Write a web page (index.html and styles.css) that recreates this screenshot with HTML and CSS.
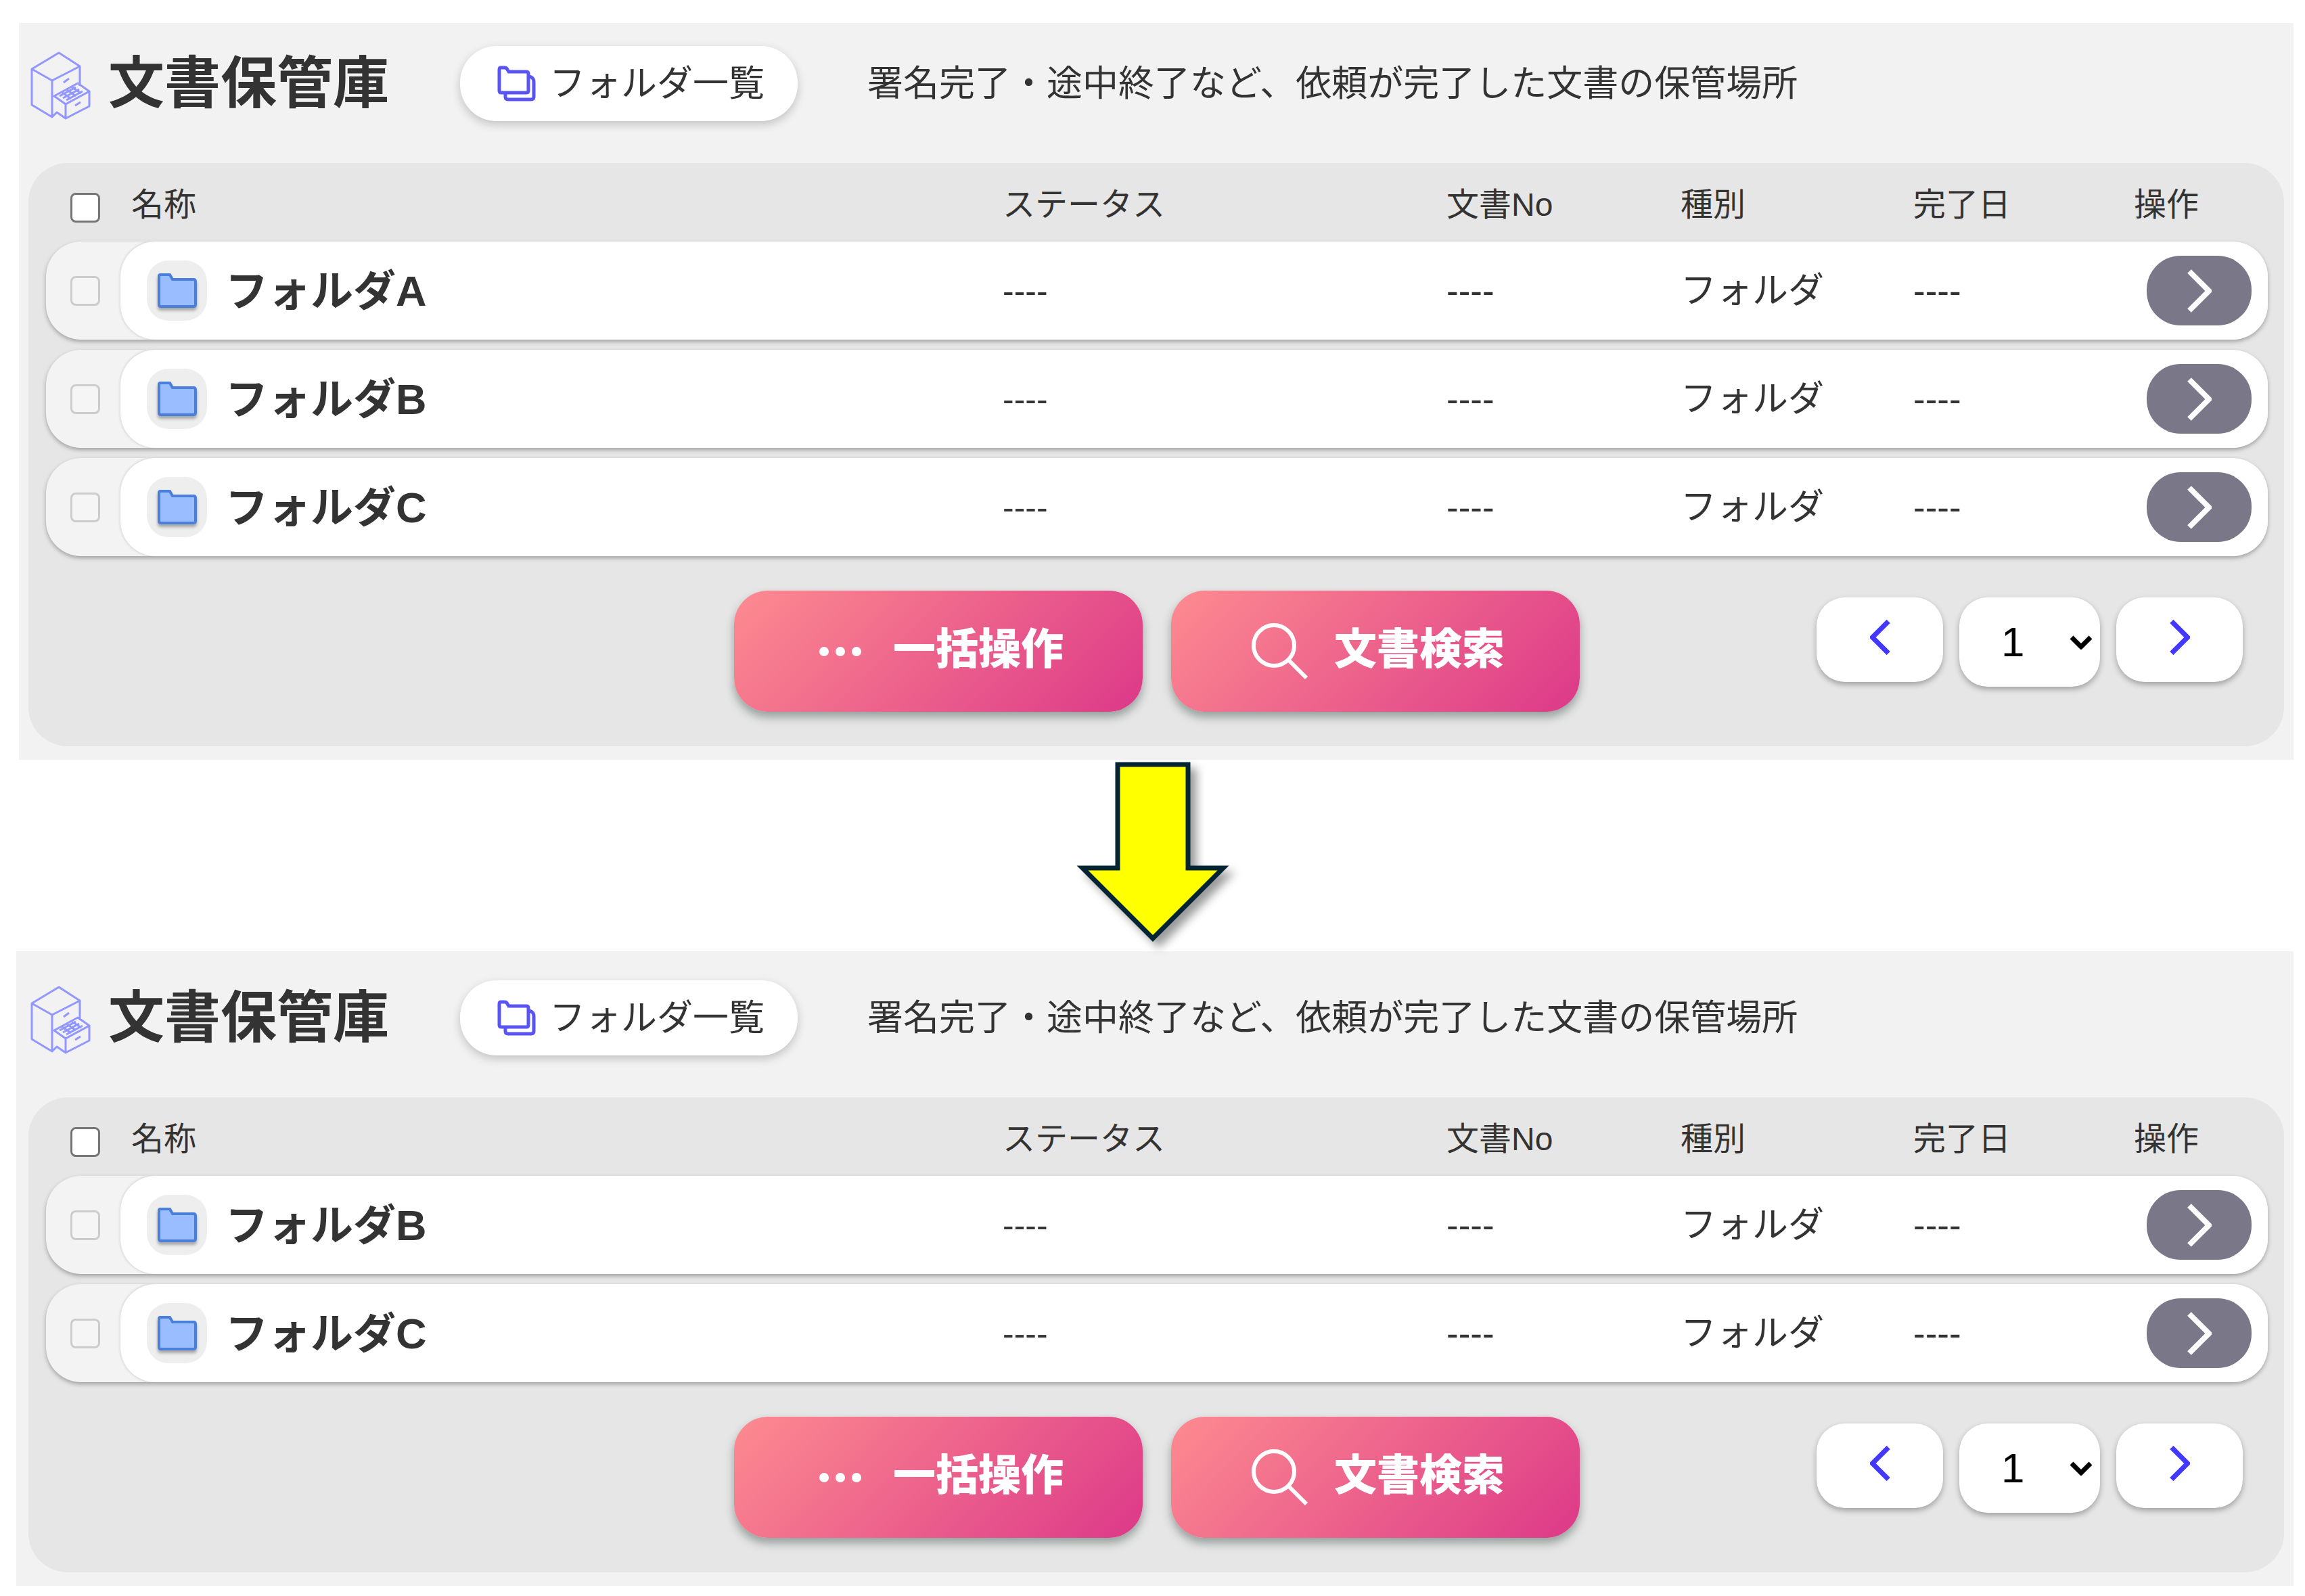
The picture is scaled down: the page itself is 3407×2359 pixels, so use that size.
FILE: index.html
```html
<!DOCTYPE html>
<html lang="ja">

<head>
    <meta charset="utf-8">
    <title>文書保管庫</title>
    <link rel="stylesheet" href="styles.css">
</head>

<body>
<svg class="sprite" aria-hidden="true">
    <symbol id="cabinet" viewBox="0 0 90 102">
        <path d="M42 2 73 22 32 43 2 26ZM2 26V79L32 97V43M73 22V51M32 97 39 90 52 99V78L35 66 70 47 87 59 52 78M87 59V81L52 99M43 66 67 53M48 69 72 56M53 72 77 59M46 60 60 70M53 56 67 66M60 52 75 62M49 46 57 40M66 80 74 75" />
    </symbol>
    <symbol id="folders" viewBox="0 0 57 53">
        <path d="M5 3H11Q14 3 15 6L17 9H43Q46 9 46 12V37Q46 40 43 40H6Q3 40 3 37V6Q3 3 5 3ZM48 16Q54 18 54 24V46Q54 50 50 50H16Q12 50 12 46V41" />
    </symbol>
    <symbol id="folder" viewBox="0 0 58 52">
        <path d="M4 2H18L22 9H53Q56 9 56 12V46Q56 49 53 49H5Q2 49 2 46V4Q2 2 4 2Z" />
    </symbol>
    <symbol id="next" viewBox="0 0 36 64">
        <path d="M3 3 32 32 3 61" />
    </symbol>
    <symbol id="dots" viewBox="0 0 72 16">
        <circle cx="8" cy="8" r="7" /><circle cx="32" cy="8" r="7" /><circle cx="56" cy="8" r="7" />
    </symbol>
    <symbol id="search" viewBox="0 0 84 84">
        <circle cx="33" cy="33" r="30" /><path d="M54 54 81 81" />
    </symbol>
</svg>

<main class="page">
    <section class="panel panel-before">
        <header class="header">
            <svg class="cabinet"><use href="#cabinet" /></svg>
            <h1>文書保管庫</h1>
            <button type="button" class="folder-list"><svg><use href="#folders" /></svg>フォルダ一覧</button>
            <p>署名完了・途中終了など、依頼が完了した文書の保管場所</p>
        </header>
        <div class="card">
            <table class="files">
                <thead>
                    <tr>
                        <th class="check"><input type="checkbox" aria-label="すべて選択"></th>
                        <th class="name">名称</th>
                        <th>ステータス</th>
                        <th>文書No</th>
                        <th>種別</th>
                        <th>完了日</th>
                        <th>操作</th>
                    </tr>
                </thead>
                <tbody>
                    <tr>
                        <td class="check"><input type="checkbox" aria-label="フォルダA" disabled></td>
                        <td class="name"><span class="badge"><svg><use href="#folder" /></svg></span>フォルダA</td>
                        <td class="status">----</td>
                        <td>----</td>
                        <td>フォルダ</td>
                        <td>----</td>
                        <td class="action"><button type="button" class="open" aria-label="開く"><svg><use href="#next" /></svg></button></td>
                    </tr>
                    <tr>
                        <td class="check"><input type="checkbox" aria-label="フォルダB" disabled></td>
                        <td class="name"><span class="badge"><svg><use href="#folder" /></svg></span>フォルダB</td>
                        <td class="status">----</td>
                        <td>----</td>
                        <td>フォルダ</td>
                        <td>----</td>
                        <td class="action"><button type="button" class="open" aria-label="開く"><svg><use href="#next" /></svg></button></td>
                    </tr>
                    <tr>
                        <td class="check"><input type="checkbox" aria-label="フォルダC" disabled></td>
                        <td class="name"><span class="badge"><svg><use href="#folder" /></svg></span>フォルダC</td>
                        <td class="status">----</td>
                        <td>----</td>
                        <td>フォルダ</td>
                        <td>----</td>
                        <td class="action"><button type="button" class="open" aria-label="開く"><svg><use href="#next" /></svg></button></td>
                    </tr>
                </tbody>
            </table>
            <footer class="footer">
                <div class="actions">
                    <button type="button" class="main-button"><svg class="dots"><use href="#dots" /></svg>一括操作</button>
                    <button type="button" class="main-button"><svg class="search"><use href="#search" /></svg>文書検索</button>
                </div>
                <nav class="pager">
                    <button type="button" aria-label="前へ"><svg class="prev"><use href="#next" /></svg></button>
                    <div class="select">
                        <select aria-label="ページ">
                            <option>1</option>
                        </select>
                        <svg viewBox="0 0 34 22"><path d="M3 4 17 18 31 4" /></svg>
                    </div>
                    <button type="button" aria-label="次へ"><svg><use href="#next" /></svg></button>
                </nav>
            </footer>
        </div>
    </section>

    <div class="arrow">
        <svg viewBox="0 0 226 266"><path d="M61 4H165V157H217L113 261 9 157H61Z" /></svg>
    </div>

    <section class="panel panel-after">
        <header class="header">
            <svg class="cabinet"><use href="#cabinet" /></svg>
            <h1>文書保管庫</h1>
            <button type="button" class="folder-list"><svg><use href="#folders" /></svg>フォルダ一覧</button>
            <p>署名完了・途中終了など、依頼が完了した文書の保管場所</p>
        </header>
        <div class="card">
            <table class="files">
                <thead>
                    <tr>
                        <th class="check"><input type="checkbox" aria-label="すべて選択"></th>
                        <th class="name">名称</th>
                        <th>ステータス</th>
                        <th>文書No</th>
                        <th>種別</th>
                        <th>完了日</th>
                        <th>操作</th>
                    </tr>
                </thead>
                <tbody>
                    <tr>
                        <td class="check"><input type="checkbox" aria-label="フォルダB" disabled></td>
                        <td class="name"><span class="badge"><svg><use href="#folder" /></svg></span>フォルダB</td>
                        <td class="status">----</td>
                        <td>----</td>
                        <td>フォルダ</td>
                        <td>----</td>
                        <td class="action"><button type="button" class="open" aria-label="開く"><svg><use href="#next" /></svg></button></td>
                    </tr>
                    <tr>
                        <td class="check"><input type="checkbox" aria-label="フォルダC" disabled></td>
                        <td class="name"><span class="badge"><svg><use href="#folder" /></svg></span>フォルダC</td>
                        <td class="status">----</td>
                        <td>----</td>
                        <td>フォルダ</td>
                        <td>----</td>
                        <td class="action"><button type="button" class="open" aria-label="開く"><svg><use href="#next" /></svg></button></td>
                    </tr>
                </tbody>
            </table>
            <footer class="footer">
                <div class="actions">
                    <button type="button" class="main-button"><svg class="dots"><use href="#dots" /></svg>一括操作</button>
                    <button type="button" class="main-button"><svg class="search"><use href="#search" /></svg>文書検索</button>
                </div>
                <nav class="pager">
                    <button type="button" aria-label="前へ"><svg class="prev"><use href="#next" /></svg></button>
                    <div class="select">
                        <select aria-label="ページ">
                            <option>1</option>
                        </select>
                        <svg viewBox="0 0 34 22"><path d="M3 4 17 18 31 4" /></svg>
                    </div>
                    <button type="button" aria-label="次へ"><svg><use href="#next" /></svg></button>
                </nav>
            </footer>
        </div>
    </section>
</main>
</body>
</html>
```
FILE: styles.css
```css
* {
    box-sizing: border-box;
}
body, html {
    padding: 0;
    margin: 0;
}
body {
    background-color: #fff;
    color: #333;
    font-family: "Liberation Sans", "Noto Sans CJK JP", sans-serif;
    font-size: 53px;
    line-height: 72px;
}
button, select {
    font-family: inherit;
    font-size: inherit;
    line-height: inherit;
    color: inherit;
    border: 0;
    margin: 0;
    padding: 0;
    background-color: #fff;
}
svg {
    display: block;
    flex: none;
    fill: none;
}
.sprite {
    display: none;
}
.page {
    padding: 34px 17px 16px 24px;
}
.panel {
    background-color: #f2f2f2;
    padding: 0 14px 20px 18px;
}
.panel-before {
    margin-left: 4px;
    padding-left: 14px;
}
.panel-after {
    padding-top: 9px;
}

/* title bar */
.header {
    display: flex;
    align-items: center;
    padding: 34px 0 62px 3px;
}
.cabinet {
    width: 90px;
    height: 102px;
    margin-top: 6px;
    stroke: #9296ff;
    stroke-width: 3;
    stroke-linejoin: round;
}
.header h1 {
    margin: 0 0 0 25px;
    width: 520px;
    font-size: 83px;
    line-height: 100px;
}
.header p {
    margin: 0 0 0 103px;
}
.folder-list {
    display: flex;
    align-items: center;
    justify-content: center;
    gap: 20px;
    width: 499px;
    height: 111px;
    padding-left: 6px;
    border-radius: 54px;
    box-shadow: 0 5px 14px rgba(0,0,0,0.2);
}
.folder-list svg {
    width: 57px;
    height: 53px;
    stroke: #5a54f2;
    stroke-width: 5;
}

/* list */
.card {
    background-color: #e6e6e6;
    border-radius: 58px;
    padding: 0 24px 51px 26px;
}
.files, .files thead {
    display: block;
}
.files tbody {
    display: grid;
    gap: 15px;
}
.files tr {
    display: grid;
    grid-template-columns: 110px 1304fr 656fr 346fr 344fr 326fr 198px;
}
.files thead tr {
    height: 116px;
    padding-top: 8px;
}
.files tbody tr {
    height: 145px;
    background-color: #f3f3f3;
    border-radius: 52px;
    box-shadow: 0 3px 6px rgba(0,0,0,0.3);
    overflow: hidden;
}
.files th, .files td {
    display: flex;
    align-items: center;
    padding: 0;
}
.files th {
    font-size: 48px;
    font-weight: normal;
}
.files td {
    background-color: #fff;
}
.files .check {
    padding-left: 36px;
    background-color: transparent;
}
.files th.check {
    padding-top: 8px;
}
.files th.name {
    padding-left: 16px;
}
.files td.name {
    padding-left: 39px;
    gap: 27px;
    font-size: 63px;
    font-weight: bold;
    border-radius: 52px 0 0 52px;
    box-shadow: 0 0 4px rgba(0,0,0,0.2);
}
.files .status {
    font-size: 50px;
}
.files .action {
    justify-content: flex-end;
    padding-right: 24px;
}
.check input {
    appearance: none;
    width: 44px;
    height: 44px;
    margin: 0;
    border: 3px solid #767676;
    border-radius: 8px;
    background-color: #fff;
}
.check input:disabled {
    border-color: #ccc;
    background-color: #f5f5f5;
}
.badge {
    display: flex;
    align-items: center;
    justify-content: center;
    width: 89px;
    height: 89px;
    border-radius: 32px;
    background-color: #eee;
}
.badge svg {
    width: 58px;
    height: 52px;
    fill: #99bdff;
    stroke: #4a80dc;
    stroke-width: 4;
    filter: drop-shadow(0 4px 2px rgba(0,0,0,0.3));
}
.open {
    display: flex;
    align-items: center;
    justify-content: center;
    width: 155px;
    height: 103px;
    border-radius: 50px;
    background-color: #7a7888;
}
.open svg {
    width: 36px;
    height: 64px;
    stroke: #fff;
    stroke-width: 8;
}

/* buttons and paging */
.footer {
    display: grid;
    grid-template-columns: 1fr auto 1fr;
    padding-top: 51px;
}
.actions {
    grid-column: 2;
    display: flex;
    gap: 42px;
}
.main-button {
    display: flex;
    align-items: center;
    justify-content: center;
    gap: 38px;
    width: 604px;
    height: 179px;
    padding: 0 0 8px 8px;
    border-radius: 50px;
    color: #fff;
    font-size: 63px;
    font-weight: 900;
    background: linear-gradient(135deg, #fd8b90, #dc3988);
    box-shadow: 0 8px 14px rgba(0,30,20,0.35);
}
.main-button svg {
    margin-top: 8px;
}
.dots {
    width: 72px;
    height: 16px;
    fill: #fff;
}
.search {
    width: 84px;
    height: 84px;
    stroke: #fff;
    stroke-width: 6;
}
.pager {
    display: flex;
    align-items: flex-start;
    justify-content: flex-end;
    gap: 24px;
    padding: 10px 37px 0 0;
}
.pager button {
    display: flex;
    align-items: center;
    justify-content: center;
    width: 187px;
    height: 125px;
    padding-bottom: 7px;
}
.pager button, .pager select {
    border-radius: 42px;
    box-shadow: 0 4px 8px rgba(0,0,0,0.3);
}
.pager button svg {
    width: 30px;
    height: 52px;
    stroke: #4338ff;
    stroke-width: 9;
}
.pager .prev {
    transform: scaleX(-1);
}
.select {
    display: grid;
    align-items: center;
}
.select select, .select svg {
    grid-area: 1 / 1;
}
.select select {
    appearance: none;
    width: 208px;
    height: 132px;
    padding-left: 62px;
    color: #000;
    font-size: 62px;
}
.select svg {
    justify-self: end;
    width: 34px;
    height: 22px;
    margin-right: 11px;
    stroke: #000;
    stroke-width: 7;
    pointer-events: none;
}

/* before / after arrow */
.arrow {
    padding: 3px 0 14px 0;
    margin-right: 7px;
}
.arrow svg {
    width: 226px;
    height: 266px;
    margin: 0 auto;
    fill: #ff0;
    stroke: #042433;
    stroke-width: 7;
    filter: drop-shadow(9px 9px 7px rgba(0,0,0,0.4));
}
```
